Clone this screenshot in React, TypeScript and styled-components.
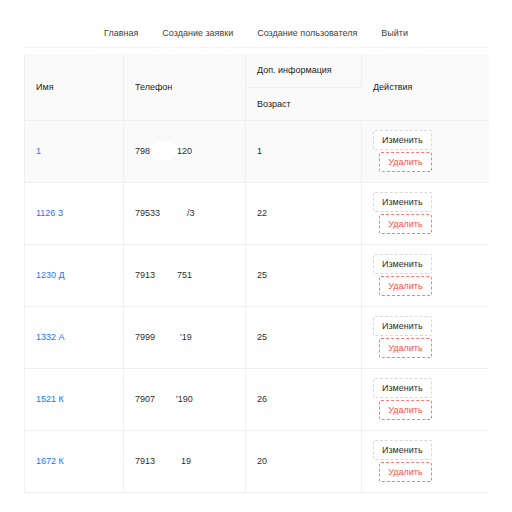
import React from "react";
import styled, { createGlobalStyle } from "styled-components";

const Global = createGlobalStyle`
  html, body { margin: 0; padding: 0; background: #ffffff; }
  body { font-family: "Liberation Sans", Arial, sans-serif; font-size: 9px; color: rgba(0,0,0,0.88); }
  * { box-sizing: border-box; }
`;

const Page = styled.div`
  padding: 19px 24px 0 24px;
  width: 512px;
`;

const Nav = styled.nav`
  height: 29px;
  display: flex;
  justify-content: center;
  align-items: center;
  border-bottom: 1px solid #f3f3f3;
  margin-bottom: 6px;
`;

const NavItem = styled.a`
  padding: 0 12px;
  font-size: 9px;
  color: rgba(0,0,0,0.82);
  text-decoration: none;
  white-space: nowrap;
`;

const Table = styled.table`
  width: 464px;
  border-collapse: collapse;
  table-layout: fixed;
  border-left: 1px solid #f0f0f0;
`;

const Th = styled.th`
  background: #fafafa;
  font-weight: 500;
  font-size: 9px;
  text-align: left;
  padding: 0 11px;
  height: 33px;
  border-right: 1px solid #f0f0f0;
  border-bottom: 1px solid #f0f0f0;
  color: rgba(0,0,0,0.92);
  &:last-child { border-right: none; }
`;

const Tr = styled.tr<{ $active?: boolean }>`
  background: ${(p) => (p.$active ? "#fafafa" : "#ffffff")};
`;

const Td = styled.td`
  height: 62px;
  padding: 0 11px;
  font-size: 9px;
  vertical-align: middle;
  border-right: 1px solid #f0f0f0;
  border-bottom: 1px solid #f0f0f0;
  color: rgba(0,0,0,0.88);
  white-space: nowrap;
  &:last-child { border-right: none; }
`;

const NameLink = styled.a`
  color: #1677ff;
  text-decoration: none;
`;

const Phone = styled.span`
  display: inline-flex;
  align-items: center;
`;

const Mask = styled.span<{ $w: number }>`
  display: inline-block;
  width: ${(p) => p.$w}px;
  height: 20px;
  background: #ffffff;
  border-radius: 50%;
`;

const Actions = styled.div`
  display: inline-flex;
  flex-direction: column;
  align-items: flex-end;
  gap: 2px;
`;

const Btn = styled.button<{ $danger?: boolean }>`
  height: 20px;
  padding: 0 8px;
  font-family: "Liberation Sans", Arial, sans-serif;
  font-size: 9px;
  background: #ffffff;
  color: ${(p) => (p.$danger ? "#ff4d4f" : "rgba(0,0,0,0.88)")};
  border: 1px dashed ${(p) => (p.$danger ? "#ff7875" : "#d9d9d9")};
  border-radius: 2px;
  cursor: pointer;
`;

const rows = [
  { name: "1", p1: "798", p2: "120", mask: 27, age: "1" },
  { name: "1126 З", p1: "79533", p2: "/3", mask: 27, age: "22" },
  { name: "1230 Д", p1: "7913", p2: "751", mask: 22, age: "25" },
  { name: "1332 А", p1: "7999", p2: "'19", mask: 25, age: "25" },
  { name: "1521 К", p1: "7907", p2: "'190", mask: 21, age: "26" },
  { name: "1672 К", p1: "7913", p2: "19", mask: 26, age: "20" },
];

export default function App() {
  return (
    <>
      <Global />
      <Page>
        <Nav>
          <NavItem>Главная</NavItem>
          <NavItem>Создание заявки</NavItem>
          <NavItem>Создание пользователя</NavItem>
          <NavItem>Выйти</NavItem>
        </Nav>
        <Table>
          <colgroup>
            <col style={{ width: 99 }} />
            <col style={{ width: 122 }} />
            <col style={{ width: 116 }} />
            <col style={{ width: 127 }} />
          </colgroup>
          <thead>
            <tr>
              <Th rowSpan={2}>Имя</Th>
              <Th rowSpan={2}>Телефон</Th>
              <Th>Доп. информация</Th>
              <Th rowSpan={2}>Действия</Th>
            </tr>
            <tr>
              <Th>Возраст</Th>
            </tr>
          </thead>
          <tbody>
            {rows.map((r, i) => (
              <Tr key={i} $active={i === 0}>
                <Td>
                  <NameLink>{r.name}</NameLink>
                </Td>
                <Td>
                  <Phone>
                    {r.p1}
                    <Mask $w={r.mask} />
                    {r.p2}
                  </Phone>
                </Td>
                <Td>{r.age}</Td>
                <Td>
                  <Actions>
                    <Btn>Изменить</Btn>
                    <Btn $danger>Удалить</Btn>
                  </Actions>
                </Td>
              </Tr>
            ))}
          </tbody>
        </Table>
      </Page>
    </>
  );
}
